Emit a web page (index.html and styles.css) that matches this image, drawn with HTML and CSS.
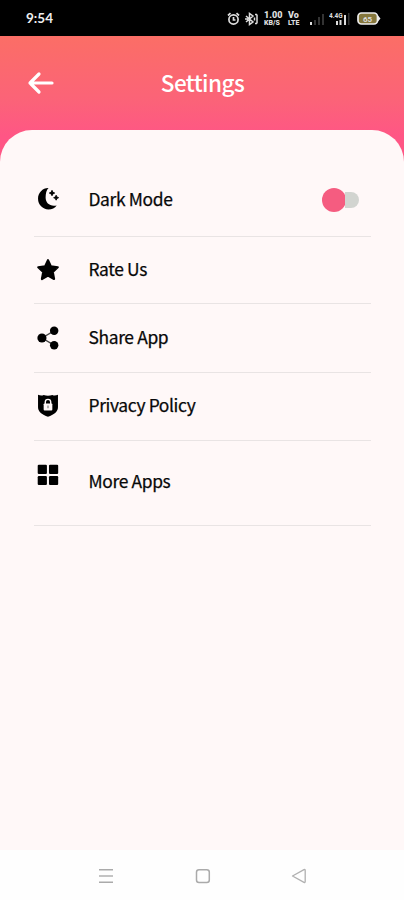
FILE: index.html
```
<!DOCTYPE html>
<html lang="en">
<head>
<meta charset="utf-8">
<title>Settings</title>
<link rel="stylesheet" href="styles.css">
</head>
<body>
<div class="phone">
  <div class="status">
    <span class="time">9:54</span>
    <div class="indicators">
      <svg class="alarm" width="13" height="14" viewBox="0 0 13 14" fill="none" stroke="#ddd" stroke-width="1.700"><circle cx="6.500" cy="7.500" r="4.600"/><path d="M1 3.500 3.500 1.200M12 3.500 9.500 1.200M6.500 5v3h2"/></svg>
      <svg class="bt" width="15" height="14" viewBox="0 0 15 14" fill="none" stroke="#ddd" stroke-width="1.500"><path d="M2 4l7 6-3.500 2.500v-11L9 4l-7 6M1 7h3M10.500 5.500v3M13 2.500v9M11 2.500h2M11 11.500h2"/></svg>
      <div class="stack speed"><b>1.00</b><b>KB/S</b></div>
      <div class="stack volte"><b>Vo</b><b>LTE</b></div>
      <svg class="signal" width="16" height="14" viewBox="0 0 16 14"><path fill="#ddd" d="M1 10h2v3H1z"/><path fill="#333" d="M5 8h2v5H5zM9 5h2v8H9zM13 2h2v11h-2z"/></svg>
      <svg class="network" width="22" height="14" viewBox="0 0 22 14"><path fill="#ddd" d="M7 9h2v4H7zM10.500 8h2v5h-2zM15 3h2v10h-2z"/><path fill="#333" d="M19 1h1.500v12H19z"/><text x="0" y="6" class="tiny">4.4G</text></svg>
      <svg class="battery" width="24" height="13" viewBox="0 0 24 13"><rect x="1" y="1" width="19.500" height="11" rx="3.500" fill="#85773c" stroke="#eee" stroke-width="1.700"/><path d="M21 3.500l2.500 3L21 9.500z" fill="#eee"/><text x="6" y="9.500" class="charge">65</text></svg>
    </div>
  </div>
  <header class="header">
    <svg class="back" width="28" height="24" viewBox="0 0 28 24" fill="none" stroke="#fff" stroke-width="3.200" stroke-linecap="round" stroke-linejoin="round"><path d="M25 12H3M12 3 3 12l9 9"/></svg>
    <h1 class="title">Settings</h1>
  </header>
  <main class="panel">
    <div class="row first">
      <svg class="icon" viewBox="0 0 24 24"><path d="M12.500 1.900C7.200 1.700 2.800 6.300 2.800 11.800s4.400 9.800 9.600 9.800c3.300 0 6-1.300 7.600-3.700-6 1.300-10.200-1.900-10.200-7.200 0-3.800.7-6.700 2.700-8.800z"/><path d="M15.700 4l.8 1.700 1.700.8-1.700.8-.8 1.700-.8-1.700-1.700-.8 1.700-.8zM19.500 8.500l.7 1.600 1.600.7-1.600.7-.7 1.600-.7-1.600-1.600-.7 1.600-.7z" stroke="#000" stroke-width=".8"/></svg>
      <span class="label">Dark Mode</span>
      <span class="switch"><i class="thumb"></i><i class="track"></i></span>
    </div>
    <div class="row second">
      <svg class="icon" viewBox="0 0 24 24"><path d="M12 3l2.700 5.700 6.300.8-4.600 4.300 1.200 6.500-5.600-3.100-5.600 3.100 1.200-6.500L3 9.500l6.300-.8z" stroke="#000" stroke-width="2" stroke-linejoin="round"/></svg>
      <span class="label">Rate Us</span>
    </div>
    <div class="row third">
      <svg class="icon" viewBox="0 0 24 24"><path d="M18.300 5 6.500 12l11.800 7" fill="none" stroke="#444" stroke-width="1.200"/><circle cx="17.700" cy="5.300" r="3.900"/><circle cx="6.400" cy="12" r="4.200"/><circle cx="17.700" cy="18.700" r="3.900"/></svg>
      <span class="label">Share App</span>
    </div>
    <div class="row fourth">
      <svg class="icon" viewBox="0 0 24 24"><path d="M2.800 2.500c1.900.8 3.700.9 5.200.2 2.600.9 5.400.9 8 0 1.500.7 3.300.6 5.200-.2V14c0 4.200-3.800 6.800-9.200 8.800C6.600 20.800 2.800 18.200 2.800 14z"/><path d="M9.500 11V9.300a2.500 2.500 0 0 1 5 0V11" fill="none" stroke="#fff8f8" stroke-width="1.300"/><rect x="8" y="10.500" width="8" height="6.500" rx=".8" fill="#fff8f8"/><path d="M12 12.500v2.500" stroke="#777" stroke-width="1"/></svg>
      <span class="label">Privacy Policy</span>
    </div>
    <div class="row fifth">
      <svg class="icon" viewBox="0 0 24 24"><rect x="2.500" y="2.500" width="8.500" height="8.600" rx="1"/><rect x="12.900" y="2.500" width="8.500" height="8.600" rx="1"/><rect x="2.500" y="13" width="8.500" height="8.300" rx="1"/><rect x="12.900" y="13" width="8.500" height="8.300" rx="1"/></svg>
      <span class="label">More Apps</span>
    </div>
  </main>
  <nav class="nav">
    <svg width="16" height="16" viewBox="0 0 16 16" fill="none" stroke="#aaa" stroke-width="1.500"><path d="M1 1.800h14M1 14.200h14"/><path d="M1 8h14" stroke="#c4c4c4" stroke-width="2"/></svg>
    <svg width="16" height="16" viewBox="0 0 16 16" fill="none" stroke="#aaa" stroke-width="1.500"><rect x="1.500" y="1.700" width="12.800" height="12.800" rx="2.500"/></svg>
    <svg width="16" height="16" viewBox="0 0 16 16" fill="none" stroke="#b0b0b0" stroke-width="1.300" stroke-linejoin="round"><path d="M1.500 8 13 1.600q1.200-.4 1.200.8v11.200q0 1.200-1.200.8z"/></svg>
  </nav>
</div>
</body>
</html>
```
FILE: styles.css
```
* { box-sizing: border-box; }
body { margin: 0; font-family: "Noto Sans CJK SC", "Noto Sans", sans-serif; color: #080808; }
.phone { width: 404px; height: 900px; display: flex; flex-direction: column; overflow: hidden; background: linear-gradient(#fb6e66 36px, #fb6378 100px, #ff5685 136px, #ff5685); }
.status { height: 36px; background: #000; color: #eee; display: flex; align-items: center; justify-content: space-between; padding: 0 23px 0 26px; }
.time { font: bold 13.500px/36px Lato, sans-serif; }
.indicators { display: flex; align-items: center; height: 36px; padding-top: 1px; }
.alarm { margin-right: 4px; }
.bt { margin-right: 5px; }
.stack { display: flex; flex-direction: column; gap: 1px; font: bold 9px/7px Roboto, sans-serif; color: #ddd; }
.speed { width: 20px; margin-right: 4px; }
.speed b:last-child, .volte b:last-child { font-size: 7px; line-height: 6px; }
.volte { width: 16px; margin-right: 5px; }
.signal { margin-right: 4px; }
.network { margin-right: 6px; }
.tiny { font: bold 6.500px Roboto, sans-serif; fill: #ddd; }
.charge { font: bold 8px Roboto, sans-serif; fill: #ddd; }
.header { height: 94px; display: grid; grid-template-columns: 1fr auto 1fr; align-items: center; padding: 0 27px; }
.title { grid-column: 2; margin: 0; padding: 0 0 3px 1px; font-size: 22.500px; line-height: 30px; font-weight: 500; color: #fff; letter-spacing: -.55px; }
.panel { flex: 1; background: #fff8f8; border-radius: 32px 32px 0 0; padding: 34px 33px 0 34px; }
.row { display: flex; align-items: center; border-bottom: 1.500px solid #e9e4e4; }
.first { height: 73px; }
.second { height: 67px; }
.third { height: 69px; }
.fourth { height: 68px; }
.fifth { height: 85px; }
.icon { width: 26px; height: 26px; flex: none; margin-left: .5px; margin-right: 28px; }
.first .icon, .fourth .icon { margin-bottom: 3px; }
.fifth .icon { margin-bottom: 16px; }
.label { padding-bottom: 3px; font-size: 17.400px; line-height: 26px; font-weight: 400; -webkit-text-stroke: .25px #080808; white-space: nowrap; letter-spacing: -.35px; }
.fifth .label { padding-bottom: 4px; }
.switch { display: flex; align-items: center; margin-left: auto; margin-right: 12px; }
.track { width: 14px; height: 16px; border-radius: 0 8px 8px 0; background: #d2d4d0; margin-left: -1px; }
.thumb { width: 24px; height: 24px; border-radius: 50%; background: #f55c80; }
.nav { height: 50px; background: #fefefe; display: flex; align-items: center; justify-content: space-between; padding: 2px 97px 0 98px; }
```
